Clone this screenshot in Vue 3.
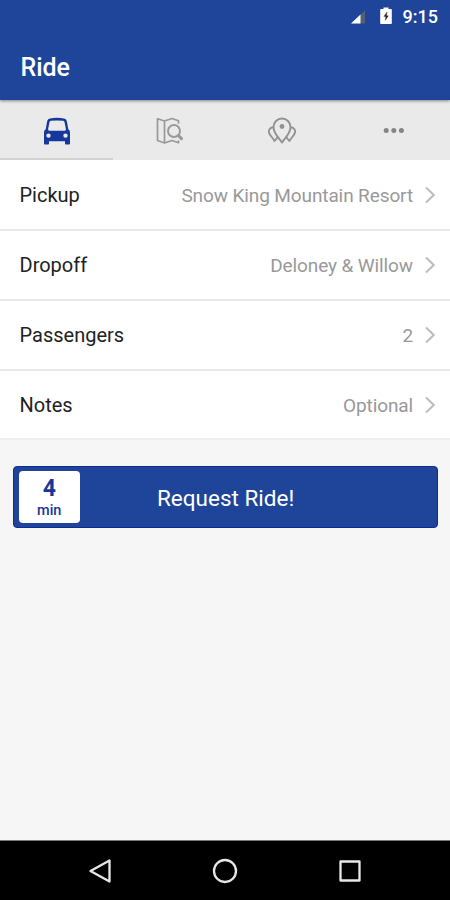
<script setup>
const rows = [
  { label: 'Pickup', value: 'Snow King Mountain Resort' },
  { label: 'Dropoff', value: 'Deloney & Willow' },
  { label: 'Passengers', value: '2' },
  { label: 'Notes', value: 'Optional' },
]
</script>

<template>
  <div class="screen">
    <header class="header">
      <div class="status">
        <svg class="signal" width="16" height="16" viewBox="0 0 16 16">
          <path d="M1 14.500 15 1.500V14.500Z" fill="#53606f" />
          <path d="M1 14.500 10.500 5.500V14.500Z" fill="#fff" />
        </svg>
        <svg class="battery" width="12" height="18" viewBox="0 0 12 18">
          <path d="M3.500 0.500h5v1.500H11a.8.8 0 0 1 .8.8V16.200a.8.8 0 0 1-.8.8H1a.8.8 0 0 1-.8-.8V2.800a.8.8 0 0 1 .8-.8h2.500Z" fill="#fff" />
          <path d="M7.100 5 3.800 9.600h2l-.5 3.800L8.400 8.800H6.500Z" fill="#222" stroke="#222" stroke-width=".3" />
        </svg>
        <span class="time">9:15</span>
      </div>
      <h1 class="title">Ride</h1>
    </header>

    <nav class="tabs">
      <button class="tab active" aria-label="Ride">
        <svg width="28" height="28" viewBox="0 0 28 28">
          <path fill-rule="evenodd" fill="#17389a" d="M7 1.400Q14 .2 21 1.400Q23.300 1.800 23.800 4L25.300 12.300Q27 13.300 27 15.200V26.700a.8.8 0 0 1-.8.800H22.800a.8.8 0 0 1-.8-.8V24.200H6V26.700a.8.8 0 0 1-.8.800H1.800A.8.8 0 0 1 1 26.700V15.200Q1 13.300 2.700 12.300L4.200 4Q4.700 1.800 7 1.400ZM7.800 3.800Q6.700 4 6.500 5L5.100 12.100Q4.800 13.800 6.300 13.800H21.700Q23.200 13.800 22.900 12.100L21.500 5Q21.300 4 20.200 3.800Q14 3.100 7.800 3.800ZM5.500 16.400a2.200 2.200 0 1 0 0 4.400a2.200 2.200 0 1 0 0-4.400ZM22.500 16.400a2.200 2.200 0 1 0 0 4.400a2.200 2.200 0 1 0 0-4.400Z" />
        </svg>
      </button>
      <button class="tab" aria-label="Explore">
        <svg width="28" height="28" viewBox="0 0 28 28" fill="none" stroke="#999" stroke-width="1.700" stroke-linejoin="round" stroke-linecap="round">
          <path d="M23.500 6V3.700L17 1.500 9.500 4 2.500 1.800V23.500L9.500 26 17 23.500 23.500 25.700V24M9.500 4V26" />
          <circle cx="19" cy="14" r="6" stroke-width="1.900" />
          <path d="M23.400 18.500 26.500 21.600" stroke-width="3" />
        </svg>
      </button>
      <button class="tab" aria-label="Stops">
        <svg width="28" height="28" viewBox="0 0 28 28" fill="none" stroke="#929292" stroke-width="1.900" stroke-linejoin="round" stroke-linecap="round">
          <path d="M14 25.500C11.500 21 5.500 17 5.500 10a8.500 8.500 0 0 1 17 0C22.500 17 16.500 21 14 25.500Z" />
          <circle cx="14" cy="9.500" r="2.400" fill="#929292" stroke="none" />
          <path d="M5 10.200C1.700 10.700.5 13.500 1 15.500C1.600 18.500 4.800 20.500 6.500 24C7.400 23 8.400 22 9.200 20.700M23 10.200C26.300 10.700 27.500 13.500 27 15.500C26.400 18.500 23.200 20.500 21.500 24C20.600 23 19.600 22 18.800 20.700" />
        </svg>
      </button>
      <button class="tab" aria-label="More">
        <svg width="28" height="28" viewBox="0 0 28 28" fill="#858585">
          <circle cx="6.200" cy="13.500" r="2.500" />
          <circle cx="13.800" cy="13.500" r="2.500" />
          <circle cx="21.400" cy="13.500" r="2.500" />
        </svg>
      </button>
    </nav>

    <main class="content">
      <div class="rows">
        <div v-for="row in rows" :key="row.label" class="row">
          <span class="label">{{ row.label }}</span>
          <span class="value">{{ row.value }}</span>
          <svg class="chevron" width="10" height="18" viewBox="0 0 10 18">
            <path d="M1 1.500 8.700 9 1 16.500" fill="none" stroke="#bdbdbd" stroke-width="2" />
          </svg>
        </div>
      </div>
      <button class="request">
        <span class="eta"><b class="minutes">4</b><span class="unit">min</span></span>
        <span class="action">Request Ride!</span>
      </button>
    </main>

    <footer class="navbar">
      <svg width="26" height="26" viewBox="0 0 26 26"><path d="M22.500 2.500V23.500L3.500 13Z" /></svg>
      <svg width="26" height="26" viewBox="0 0 26 26"><circle cx="13" cy="13" r="11" /></svg>
      <svg width="26" height="26" viewBox="0 0 26 26"><rect x="3.500" y="3.500" width="19" height="19" /></svg>
    </footer>
  </div>
</template>

<style>
body { margin: 0; }
</style>

<style scoped>
.screen {
  display: flex;
  flex-direction: column;
  width: 450px;
  height: 900px;
  overflow: hidden;
  background: #f6f6f6;
  font-family: Roboto, "Liberation Sans", sans-serif;
}
.screen * { box-sizing: border-box; }
button { border: 0; padding: 0; font: inherit; }
.header {
  flex: none;
  height: 100px;
  background: #1f459b;
  color: #fff;
  box-shadow: 0 1px 3px rgba(0, 0, 0, .45);
  z-index: 1;
}
.status {
  display: flex;
  align-items: center;
  justify-content: flex-end;
  height: 33px;
  padding-right: 12px;
}
.signal { margin: 1px 14px 0 0; }
.battery { margin: 0 11px 2px 0; }
.time { font-size: 18px; font-weight: 500; line-height: 33px; }
.title {
  margin: 0;
  padding-left: 20.5px;
  font-size: 25px;
  letter-spacing: -.1px;
  font-weight: 500;
  line-height: 69px;
}
.tabs {
  flex: none;
  display: grid;
  grid-template-columns: repeat(4, 1fr);
  height: 60px;
  background: #eaeaea;
}
.tab {
  display: flex;
  align-items: center;
  justify-content: center;
  padding: 2px 0 0 1px;
  background: none;
}
.active {
  padding-top: 3px;
  border-bottom: 2px solid #d2d2d2;
}
.content { flex: 1; }
.rows { padding-top: 1px; background: #fff; }
.row {
  display: flex;
  align-items: center;
  height: 70px;
  padding: 0 15px 0 19.5px;
  border-bottom: 2px solid #e9e9e9;
}
.row:last-child { height: 69px; padding-top: 1px; border-bottom-color: #efefef; }
.label { font-size: 20px; color: #222; }
.value {
  margin-left: auto;
  font-size: 19px;
  letter-spacing: -.11px;
  color: #999;
}
.chevron { margin-left: 12px; }
.request {
  display: flex;
  align-items: center;
  width: 425px;
  height: 62px;
  margin: 26px 0 0 13px;
  padding: 0 5px 0 4.5px;
  background: #1f459b;
  border: 1px solid #0c2b94;
  border-radius: 4px;
  color: #fff;
}
.eta {
  display: flex;
  flex-direction: column;
  align-items: center;
  width: 61.5px;
  height: 52px;
  padding-top: 4px;
  background: #fff;
  border-radius: 4px;
  color: #17389a;
}
.minutes { font-size: 23px; line-height: 27px; font-weight: 700; }
.unit { font-size: 14.5px; line-height: 17px; font-weight: 500; }
.action {
  margin-left: 77px;
  padding-top: 2px;
  font-size: 22.5px;
}
.navbar {
  flex: none;
  display: flex;
  justify-content: center;
  align-items: center;
  gap: 99px;
  height: 60px;
  background: #000;
  border-top: 1px solid #777;
}
.navbar svg {
  fill: none;
  stroke: #e8e8e8;
  stroke-width: 2.3;
  stroke-linejoin: round;
}
</style>
